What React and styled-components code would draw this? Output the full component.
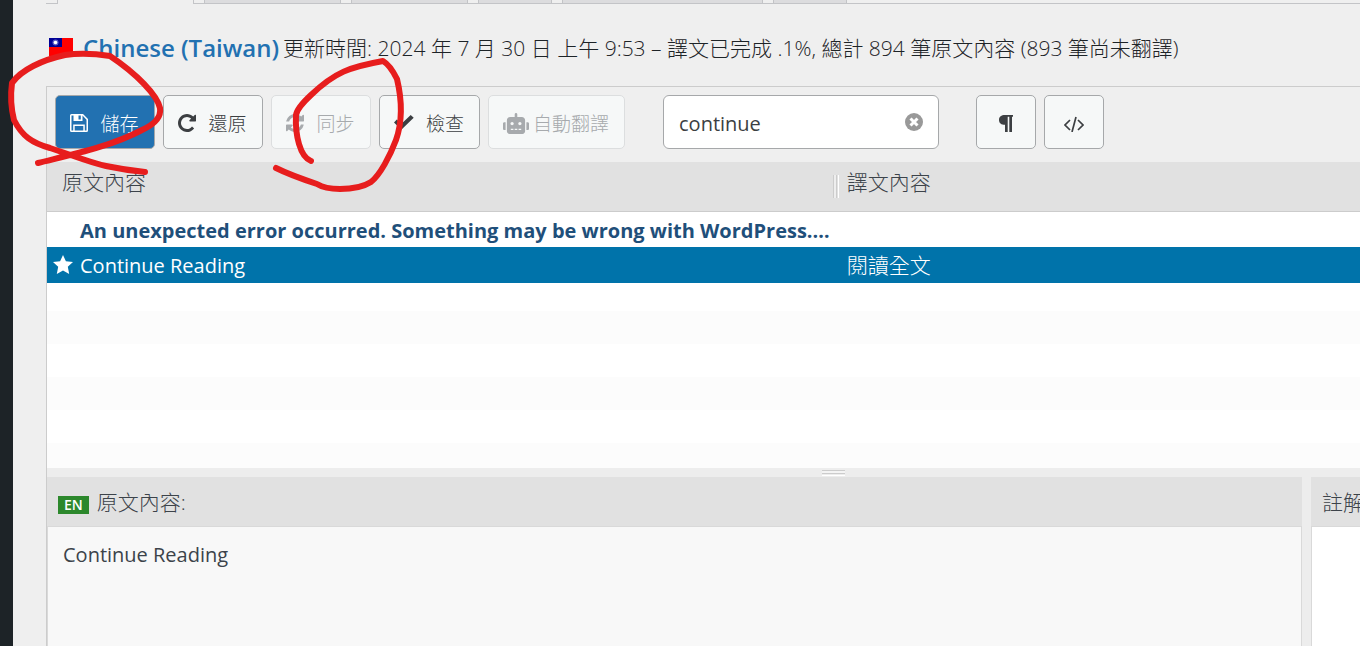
import { useState } from "react";
import styled, { createGlobalStyle, css } from "styled-components";

const GlobalStyle = createGlobalStyle`
  * {
    box-sizing: border-box;
  }
  body {
    margin: 0;
    background-color: #efefef;
    color: #3c434a;
    font-family: "Open Sans", "Noto Sans CJK TC", sans-serif;
    font-size: 20px;
    overflow: hidden;
  }
`;

const Page = styled.div`
  position: relative;
  display: flex;
  min-height: 100vh;
  overflow: hidden;
`;
const AdminMenu = styled.aside`
  flex: 0 0 13px;
  background-color: #1d2327;
`;
const Content = styled.main`
  flex: 1;
  min-width: 0;
  display: flex;
  flex-direction: column;
  padding-left: 33px;
`;

const Tabs = styled.nav`
  display: flex;
  height: 4px;
  padding-left: 11px;
  gap: 10px;
  border-bottom: 1px solid #c3c4c7;
`;
const Tab = styled.a`
  width: ${(props) => props.$width}px;
  height: ${(props) => (props.$active ? 4 : 3)}px;
  overflow: hidden;
  border: solid #c3c4c7;
  border-width: 0 1px;
  background-color: ${(props) => (props.$active ? "#efefef" : "#dcdcde")};
`;

const Heading = styled.header`
  display: flex;
  align-items: center;
  height: 82px;
  padding: 4px 0 0 3px;
  color: #1d2327;
  font-size: 21px;
  font-weight: 300;
  white-space: nowrap;
`;
const Flag = styled.svg`
  width: 24px;
  height: 18px;
  margin-right: 10px;
`;
const Language = styled.a`
  margin-right: 4px;
  color: #2271b1;
  font-size: 24px;
  font-weight: 600;
  text-decoration: none;
`;

const Editor = styled.section`
  flex: 1;
  display: flex;
  flex-direction: column;
  border: solid #ccc;
  border-width: 1px 0 0 1px;
`;
const Toolbar = styled.div`
  display: flex;
  gap: 8px;
  padding: 8px 8px 13px;
`;
const Button = styled.button`
  display: flex;
  align-items: center;
  justify-content: center;
  gap: ${(props) => (props.$tight ? 4 : 12)}px;
  min-width: ${(props) => (props.$square ? 60 : 100)}px;
  height: 54px;
  padding: 2px 15px 0 14px;
  border: 1px solid #a6a8aa;
  border-radius: 5px;
  background-color: #f6f8f8;
  color: #3c3f42;
  font-family: inherit;
  font-size: 19px;
  font-weight: 300;
  white-space: nowrap;

  &:disabled {
    border-color: #dcdedf;
    color: #a7aaad;
  }

  ${(props) =>
    props.$primary &&
    css`
      background-color: #2271b1;
      color: #fff;
    `}
`;
const Icon = styled.svg`
  flex: none;
  fill: currentColor;
`;
const SearchBox = styled.div`
  display: flex;
  align-items: center;
  width: 276px;
  height: 54px;
  margin: 0 29px 0 30px;
  padding: 2px 15px 0;
  border: 1px solid #a6a8aa;
  border-radius: 6px;
  background-color: #fff;
`;
const SearchInput = styled.input`
  flex: 1;
  min-width: 0;
  padding: 0;
  border: none;
  outline: none;
  background: none;
  color: #3c3f42;
  font-family: inherit;
  font-size: 20px;
`;
const ClearButton = styled.button`
  display: flex;
  padding: 0 0 2px;
  border: none;
  background: none;
  color: #999;
`;

const ListArea = styled.div`
  height: 306px;
  background: repeating-linear-gradient(#fff 0 33px, #fcfcfc 33px 66px) 0 -16px;
  background-size: 100% 660px;
`;
const List = styled.table`
  width: 100%;
  table-layout: fixed;
  border-collapse: separate;
  border-spacing: 0;
`;
const HeadCell = styled.th`
  position: relative;
  width: ${(props) => props.$width};
  height: 50px;
  padding: 0 0 10px ${(props) => (props.$first ? 15 : 12)}px;
  border-bottom: 1px solid #ccc;
  background-color: #e1e1e1;
  font-size: 21px;
  font-weight: 300;
  line-height: 24px;
  text-align: left;
`;
const ColumnGrip = styled.span`
  position: absolute;
  left: -2px;
  top: 13px;
  width: 6px;
  height: 23px;
  background: linear-gradient(
    90deg,
    #ccc 0 1px,
    #eee 1px 3px,
    #ccc 3px 4px,
    #e1e1e1 4px 5px,
    #fff 5px
  );
`;
const Row = styled.tr`
  height: ${(props) => (props.$selected ? 36 : 35)}px;
  background-color: ${(props) => (props.$selected ? "#0073aa" : "#fff")};
  color: ${(props) => (props.$selected ? "#fff" : "#1f4f7a")};
  font-weight: ${(props) => (props.$selected ? 400 : 700)};
`;
const Cell = styled.td`
  padding: ${(props) => (props.$first ? "2px 0 0 6px" : "0 0 0 12px")};
  line-height: 28px;
  white-space: nowrap;
`;
const Translation = styled.span`
  font-size: 21px;
  font-weight: 300;
`;
const CellContent = styled.div`
  display: flex;
  align-items: center;
`;
const Marker = styled.span`
  display: flex;
  width: 27px;
  padding-bottom: 4px;
`;

const SplitBar = styled.div`
  height: 9px;
  padding: 2px 0 0 59%;
  background-color: #ededed;
`;
const SplitGrip = styled.div`
  width: 23px;
  height: 6px;
  background: linear-gradient(
    #ccc 0 1px,
    #f4f4f4 1px 3px,
    #ccc 3px 4px,
    #ededed 4px 5px,
    #fff 5px
  );
`;
const Panes = styled.div`
  flex: 1;
  display: flex;
  gap: 9px;
  background-color: #ededed;
`;
const Pane = styled.section`
  display: flex;
  flex-direction: column;
  flex: ${(props) => (props.$narrow ? "0 0 49px" : "1")};
  min-width: 0;
  overflow: hidden;
`;
const PaneTitle = styled.h2`
  display: flex;
  align-items: baseline;
  gap: 8px;
  height: 49px;
  margin: 0;
  padding: 10px 0 0 11px;
  background-color: #e1e1e1;
  font-size: 21px;
  font-weight: 300;
  line-height: 30px;
  white-space: nowrap;
`;
const LangBadge = styled.span`
  padding: 0 6px;
  background-color: #2c882c;
  color: #fff;
  font-size: 14px;
  font-weight: 600;
  line-height: 18px;
`;
const PaneBody = styled.div`
  flex: 1;
  padding: 13px 15px;
  border: solid #d9d9d9;
  border-width: ${(props) => (props.$narrow ? "1px 0 0 1px" : "1px 1px 0")};
  background-color: ${(props) => (props.$narrow ? "#fff" : "#f8f8f8")};
  line-height: 30px;
`;

const Annotations = styled.svg`
  position: absolute;
  left: 0;
  top: 0;
  width: 420px;
  height: 210px;
  fill: none;
  stroke: #e71d1d;
  stroke-width: 6;
  stroke-linecap: round;
  stroke-linejoin: round;
  pointer-events: none;
`;

const tabs = [
  { name: "overview", width: 137, active: true },
  { name: "strings", width: 137 },
  { name: "sources", width: 117 },
  { name: "files", width: 74 },
  { name: "settings", width: 201 },
  { name: "advanced", width: 74 },
];

const rows = [
  {
    source:
      "An unexpected error occurred. Something may be wrong with WordPress.…",
    target: "",
  },
  { source: "Continue Reading", target: "閱讀全文", selected: true },
];

const TaiwanFlag = () => (
  <Flag viewBox="0 0 24 18">
    <rect width="24" height="18" fill="#f00" />
    <rect width="13" height="9" fill="#000095" />
    <circle cx="6.5" cy="4.5" r="3" fill="#5c5cc8" />
    <circle cx="6.5" cy="4.5" r="1.8" fill="#fff" />
  </Flag>
);

const SaveIcon = () => (
  <Icon width="18" height="18" viewBox="0 0 18 18">
    <path
      fillRule="evenodd"
      d="M1.500 0H13l5 5v11.500a1.500 1.500 0 0 1-1.500 1.500h-15A1.500 1.500 0 0 1 0 16.500v-15A1.500 1.500 0 0 1 1.500 0ZM1.500 1.500v15H3.200V10.500H14.800V16.500H16.500V5.700L12.500 1.500V7H3.500V1.500ZM8.500 1.500V5.500H10.800V1.500ZM4.700 12V16.500H13.300V12Z"
    />
  </Icon>
);

const RevertIcon = () => (
  <Icon width="18" height="18" viewBox="0 0 1536 1536">
    <path d="M1536 128v448q0 26-19 45t-45 19h-448q-42 0-59-40-17-39 14-69l138-138Q969 256 768 256q-104 0-198.500 40.500T406 406 296.500 569.500 256 768t40.500 198.500T406 1130t163.500 109.500T768 1280q119 0 225-52t179-147q7-10 23-12 15 0 25 9l137 138q9 8 9.500 20.500t-7.500 22.500q-109 132-264 204.500T768 1536q-156 0-298-61t-245-164-164-245T0 768t61-298 164-245T470 61 768 0q147 0 284.500 55.500T1297 212l130-129q29-31 70-14 39 17 39 59z" />
  </Icon>
);

const SyncIcon = () => (
  <Icon width="18" height="18" viewBox="0 0 1536 1536">
    <path d="M1511 928q0 5-1 7-64 268-268 434.500T764 1536q-146 0-282.500-55T238 1324l-129 129q-19 19-45 19t-45-19-19-45V960q0-26 19-45t45-19h448q26 0 45 19t19 45-19 45l-137 137q71 66 161 102t187 36q134 0 250-65t186-179q11-17 53-117 8-23 30-23h192q13 0 22.500 9.500t9.500 22.500zm25-800v448q0 26-19 45t-45 19h-448q-26 0-45-19t-19-45 19-45l138-138Q969 256 768 256q-134 0-250 65T332 500q-11 17-53 117-8 23-30 23H50q-13 0-22.500-9.500T18 608v-7q65-268 270-434.500T768 0q146 0 284 55.500T1297 212l130-129q19-19 45-19t45 19 19 45z" />
  </Icon>
);

const CheckIcon = () => (
  <Icon width="20" height="18" viewBox="0 0 20 18">
    <path d="m0 8.500 2.800-2.900 4.400 4.400L16.700 1l3 2.800L7.300 15.800Z" />
  </Icon>
);

const RobotIcon = () => (
  <Icon width="26" height="21" viewBox="0 0 640 512">
    <path d="M0 256v128c0 17.700 14.300 32 32 32h32V224H32c-17.700 0-32 14.300-32 32zM464 96H352V32c0-17.700-14.300-32-32-32s-32 14.300-32 32v64H176c-44.200 0-80 35.800-80 80v272c0 35.300 28.700 64 64 64h320c35.300 0 64-28.700 64-64V176c0-44.200-35.800-80-80-80zM256 416h-64v-32h64v32zm-32-120c-22.100 0-40-17.900-40-40s17.900-40 40-40 40 17.900 40 40-17.900 40-40 40zm128 120h-64v-32h64v32zm96 0h-64v-32h64v32zm-32-120c-22.100 0-40-17.900-40-40s17.900-40 40-40 40 17.900 40 40-17.900 40-40 40zm192-72h-32v192h32c17.700 0 32-14.300 32-32V256c0-17.700-14.300-32-32-32z" />
  </Icon>
);

const ClearIcon = () => (
  <Icon width="18" height="18" viewBox="0 0 18 18">
    <circle cx="9" cy="9" r="9" />
    <path d="m5.500 5.500 7 7m0-7-7 7" stroke="#fff" strokeWidth="3" />
  </Icon>
);

const PilcrowIcon = () => (
  <Icon width="14" height="17" viewBox="0 0 14 17">
    <path d="M14 0v1.800h-1V17h-2.700V1.800H8.700V17H6V9.800C2.300 9.800 0 8 0 4.900S2.300 0 6 0Z" />
  </Icon>
);

const CodeIcon = () => (
  <Icon width="20" height="18" viewBox="0 0 20 18">
    <path
      d="M6 6 1 11l5 5M14 6l5 5-5 5M12 3 8 18"
      fill="none"
      stroke="currentColor"
      strokeWidth="1.700"
    />
  </Icon>
);

const StarIcon = () => (
  <Icon width="20" height="19" viewBox="0 0 20 19">
    <path d="m10 0 2.900 6.300 7.100.8-5.200 4.700L16.200 19 10 15.400 3.800 19l1.400-7.200L0 7.100l7.100-.8Z" />
  </Icon>
);

export default function App() {
  const [searchText, setSearchText] = useState("continue");

  return (
    <Page>
      <GlobalStyle />
      <AdminMenu />
      <Content>
        <Tabs>
          {tabs.map((tab) => (
            <Tab
              key={tab.name}
              href={`#${tab.name}`}
              $width={tab.width}
              $active={tab.active}
            />
          ))}
        </Tabs>
        <Heading>
          <TaiwanFlag />
          <Language href="#language">Chinese (Taiwan)</Language>
          <span>
            更新時間: 2024 年 7 月 30 日 上午 9:53 – 譯文已完成 .1%, 總計 894
            筆原文內容 (893 筆尚未翻譯)
          </span>
        </Heading>
        <Editor>
          <Toolbar>
            <Button $primary>
              <SaveIcon />
              儲存
            </Button>
            <Button>
              <RevertIcon />
              還原
            </Button>
            <Button disabled>
              <SyncIcon />
              同步
            </Button>
            <Button>
              <CheckIcon />
              檢查
            </Button>
            <Button disabled $tight>
              <RobotIcon />
              自動翻譯
            </Button>
            <SearchBox>
              <SearchInput
                type="text"
                aria-label="Filter"
                value={searchText}
                onChange={(e) => setSearchText(e.target.value)}
              />
              <ClearButton aria-label="Clear" onClick={() => setSearchText("")}>
                <ClearIcon />
              </ClearButton>
            </SearchBox>
            <Button $square aria-label="Show invisibles">
              <PilcrowIcon />
            </Button>
            <Button $square aria-label="Code view">
              <CodeIcon />
            </Button>
          </Toolbar>
          <ListArea>
            <List>
              <thead>
                <tr>
                  <HeadCell $width="60%" $first>
                    原文內容
                  </HeadCell>
                  <HeadCell $width="40%">
                    <ColumnGrip />
                    譯文內容
                  </HeadCell>
                </tr>
              </thead>
              <tbody>
                {rows.map((row) => (
                  <Row key={row.source} $selected={row.selected}>
                    <Cell $first>
                      <CellContent>
                        <Marker>{row.selected && <StarIcon />}</Marker>
                        {row.source}
                      </CellContent>
                    </Cell>
                    <Cell>
                      <Translation>{row.target}</Translation>
                    </Cell>
                  </Row>
                ))}
              </tbody>
            </List>
          </ListArea>
          <SplitBar>
            <SplitGrip />
          </SplitBar>
          <Panes>
            <Pane>
              <PaneTitle>
                <LangBadge>EN</LangBadge>
                原文內容:
              </PaneTitle>
              <PaneBody>Continue Reading</PaneBody>
            </Pane>
            <Pane $narrow>
              <PaneTitle>註解</PaneTitle>
              <PaneBody $narrow />
            </Pane>
          </Panes>
        </Editor>
      </Content>
      <Annotations viewBox="0 0 420 210">
        <path d="M38 163C70 155 110 147 142 130Q162 121 160 108C157 95 137 74 110 56C97 54 80 53 65 55C42 60 21 70 12 83C10 98 12 112 14 120C22 136 32 143 50 148C72 155 88 162 106 166Q125 170 145 172" />
        <path d="M311 161C300 157 295 135 296 115Q297 108 311 95C335 72 350 67 383 61Q390 65 397 79C402 100 403 120 396 140C390 156 380 175 371 182Q360 189 340 189Q325 189 317 184Q290 175 276 168" />
      </Annotations>
    </Page>
  );
}
